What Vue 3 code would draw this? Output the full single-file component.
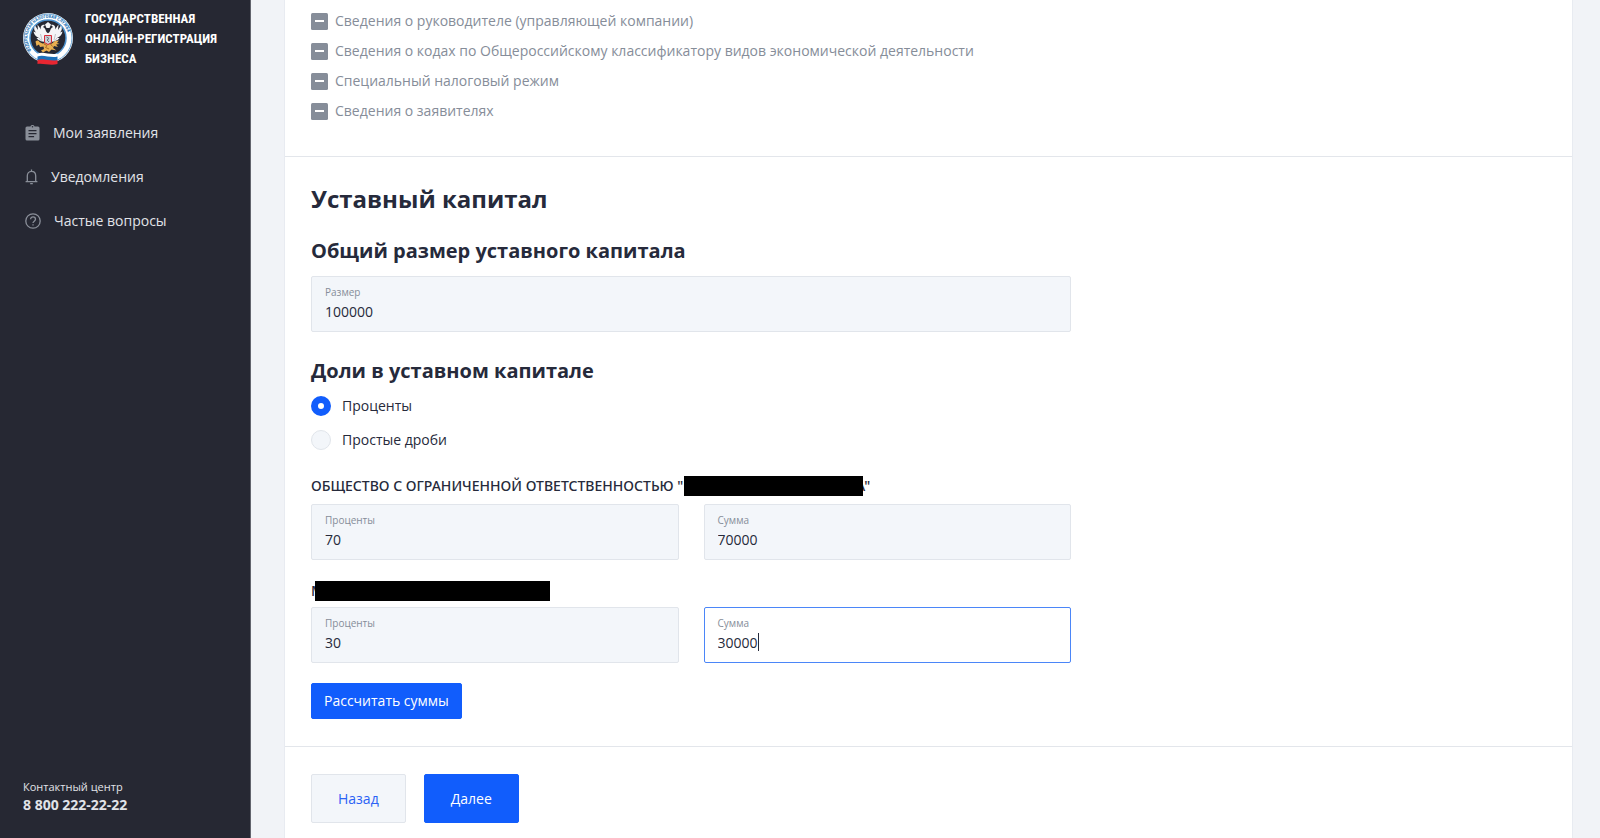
<script setup>
import { ref } from 'vue'

const steps = [
  'Сведения о руководителе (управляющей компании)',
  'Сведения о кодах по Общероссийскому классификатору видов экономической деятельности',
  'Специальный налоговый режим',
  'Сведения о заявителях',
]
const total = ref('100000')
const shareType = ref('percent')
const company = ref({ percent: '70', sum: '70000' })
const person = ref({ percent: '30', sum: '30000' })
</script>

<template>
  <div class="layout">
    <aside class="sidebar">
      <a class="brand" href="#">
        <svg class="emblem" viewBox="0 0 100 104" aria-hidden="true">
          <defs>
            <path id="ring-text" d="M17 75 A 41 41 0 1 1 83 75" />
          </defs>
          <circle cx="50" cy="50" r="50" fill="#fff" />
          <circle cx="50" cy="50" r="48" fill="none" stroke="#6aa5d6" stroke-width="2" />
          <circle cx="50" cy="50" r="36" fill="#262833" stroke="#4c91cd" stroke-width="3" />
          <text class="ring"><textPath href="#ring-text">ФЕДЕРАЛЬНАЯ НАЛОГОВАЯ СЛУЖБА</textPath></text>
          <path fill="#f4f5f7" d="M47 30 l-3-7 6-5 6 5-3 7z" />
          <path fill="#f4f5f7" d="M47 58 C40 58 31 56 27 50 L32 50 C25 47 22 43 21 37 L26 39 C22 35 21 30 24 25 L30 34 29 23 36 33 C34 27 38 22 44 24 L40 28 C45 30 45 35 47 38 C49 41 51 41 53 38 C55 35 55 30 60 28 L56 24 C62 22 66 27 64 33 L71 23 70 34 76 25 C79 30 78 35 74 39 L79 37 C78 43 75 47 68 50 L73 50 C69 56 60 58 53 58 Z" />
          <path d="M32 50l5 6M35 42l3 12M65 42l-3 12M68 50l-5 6" stroke="#8b919a" stroke-width="1" fill="none" />
          <path d="M25 57q5-4 8 1l6 3 7-1 4 3 8-2 6-5 8-1-4 5 5 2-7 1 4 5-8-2-2 4 7 5-10-2-5 5-5-3-7 4-4-4 6-3-1-5-7 1-2-5-5 3z" fill="#e9af50" />
          <path d="M42 62l6 3-3 4 7 3M55 62l4 5" stroke="#a66c26" stroke-width="2" fill="none" />
          <path d="M43 45h14v14l-7 4-7-4z" fill="#c9d0d6" stroke="#d92d3a" stroke-width="2" />
          <path d="M47 48l5 3-4 3 4 4" stroke="#66717b" stroke-width="2" fill="none" />
          <path d="M29 81c12-5 26 4 40 0v7c-14 5-28-4-40 0z" fill="#fff" />
          <path d="M29 87c12-5 26 4 40 0v8c-14 5-28-4-40 0z" fill="#1d70b8" />
          <path d="M29 94c12-5 26 4 40 0v8c-14 4-28-2-40 0z" fill="#e92631" />
        </svg>
        <span class="brand-name">Государственная<br />онлайн-регистрация<br />бизнеса</span>
      </a>

      <nav class="nav">
        <a href="#">
          <svg width="15" height="16" viewBox="0 0 15 16" aria-hidden="true">
            <path fill="currentColor" fill-rule="evenodd" d="M2 1.500h3.400a2.200 2.200 0 0 1 4.200 0H13A1.500 1.500 0 0 1 14.500 3v11a1.500 1.500 0 0 1-1.500 1.500H2A1.500 1.500 0 0 1 .5 14V3A1.500 1.500 0 0 1 2 1.500zM7.500 1a.8.8 0 1 0 0 1.600.8.8 0 0 0 0-1.600zM3.500 5v1.300h8V5zm0 3v1.300h8V8zm0 3v1.300h5.600V11z" />
          </svg>
          Мои заявления
        </a>
        <a href="#">
          <svg width="13" height="16" viewBox="0 0 13 16" fill="none" stroke="currentColor" stroke-width="1.300" aria-hidden="true">
            <path d="M.6 12.700h11.800M2.300 12.500V7c0-2.800 1.600-4.700 4.200-4.700s4.200 1.900 4.200 4.700v5.500M6.500 2.200V.4M5.200 14.700h2.600" />
          </svg>
          Уведомления
        </a>
        <a href="#">
          <svg width="16" height="16" viewBox="0 0 16 16" fill="none" stroke="currentColor" stroke-width="1.300" aria-hidden="true">
            <circle cx="8" cy="8" r="7.200" />
            <path d="M5.600 6.300c0-3.200 4.900-3 4.900 0 0 1.800-2.500 1.900-2.500 3.700M8 11.200v1.400" />
          </svg>
          Частые вопросы
        </a>
      </nav>

      <div class="contact">
        <span>Контактный центр</span>
        <a href="tel:88002222222">8 800 222-22-22</a>
      </div>
    </aside>

    <main class="page">
      <div class="card">
        <section class="steps">
          <ul>
            <li v-for="step in steps" :key="step">
              <svg width="17" height="17" viewBox="0 0 17 17" aria-hidden="true">
                <rect width="17" height="17" rx="1.500" fill="#868d99" />
                <path d="M4 8h9" stroke="#fff" stroke-width="2" />
              </svg>
              {{ step }}
            </li>
          </ul>
        </section>

        <section class="capital">
          <form class="form" @submit.prevent>
            <h1>Уставный капитал</h1>
            <h2>Общий размер уставного капитала</h2>
            <label class="field">
              <span>Размер</span>
              <input v-model="total" type="text" />
            </label>

            <h2 class="shares-title">Доли в уставном капитале</h2>
            <div class="radios">
              <label><input v-model="shareType" type="radio" name="share" value="percent" />Проценты</label>
              <label><input v-model="shareType" type="radio" name="share" value="fraction" />Простые дроби</label>
            </div>

            <p class="owner">ОБЩЕСТВО С ОГРАНИЧЕННОЙ ОТВЕТСТВЕННОСТЬЮ "Е<span class="mask mask-company"></span>А"</p>
            <div class="pair">
              <label class="field">
                <span>Проценты</span>
                <input v-model="company.percent" type="text" />
              </label>
              <label class="field">
                <span>Сумма</span>
                <input v-model="company.sum" type="text" />
              </label>
            </div>

            <p class="owner owner-person">М<span class="mask mask-person"></span></p>
            <div class="pair">
              <label class="field">
                <span>Проценты</span>
                <input v-model="person.percent" type="text" />
              </label>
              <label class="field active">
                <span>Сумма</span>
                <span class="entry"><input v-model="person.sum" type="text" /><i class="caret"></i></span>
              </label>
            </div>

            <button class="btn primary calc" type="button">Рассчитать суммы</button>
          </form>
        </section>

        <footer class="actions">
          <button class="btn secondary" type="button">Назад</button>
          <button class="btn primary" type="button">Далее</button>
        </footer>
      </div>
    </main>
  </div>
</template>

<style>
body {
  margin: 0;
  background: #f1f3f7;
}
</style>

<style scoped>
* {
  box-sizing: border-box;
}
.layout {
  display: flex;
  min-height: 100vh;
  font: 14px/20px "Open Sans", "Noto Sans", sans-serif;
  color: #262a3b;
}
.sidebar {
  flex: none;
  width: 251px;
  display: flex;
  flex-direction: column;
  padding: 9px 22px 24px 23px;
  background: #262833;
  border-right: 1px solid #62646d;
  color: #e1e3e8;
}
a {
  color: inherit;
  text-decoration: none;
}
.brand {
  display: flex;
  align-items: center;
  gap: 12px;
}
.emblem {
  flex: none;
  width: 50px;
  height: 52px;
}
.ring {
  font: bold 9px "Roboto Condensed", "Liberation Sans", sans-serif;
  fill: #2d78b8;
}
.brand-name {
  font: bold 13px/20px "Roboto Condensed", "Roboto", sans-serif;
  color: #fff;
  text-transform: uppercase;
  white-space: nowrap;
}
.nav {
  display: flex;
  flex-direction: column;
  gap: 24px;
  margin-top: 54px;
  padding-left: 2px;
}
.nav a {
  display: flex;
  align-items: center;
  gap: 13px;
}
.nav svg {
  color: #8a8f99;
}
.contact {
  display: flex;
  flex-direction: column;
  margin-top: auto;
  font-size: 11px;
  line-height: 18px;
}
.contact a {
  font-size: 14px;
  font-weight: 700;
}
.page {
  flex: 1;
  display: flex;
  padding: 0 27px 0 33px;
}
.card {
  flex: 1;
  background: #fff;
  border: solid #e8ebf1;
  border-width: 0 1px;
}
.steps {
  padding: 11px 26px 35px;
}
.steps ul {
  display: grid;
  gap: 10px;
  margin: 0;
  padding: 0;
  list-style: none;
}
.steps li {
  display: flex;
  align-items: center;
  gap: 7px;
  min-height: 20px;
  color: #868d99;
}
.capital {
  padding: 25px 26px 27px;
  border: solid #e3e6eb;
  border-width: 1px 0;
}
.form {
  max-width: 760px;
}
h1 {
  margin: 0;
  font-size: 24px;
  line-height: 34px;
}
h2 {
  margin: 20px 0 10px;
  font-size: 20px;
  line-height: 30px;
}
.field {
  display: flex;
  flex-direction: column;
  height: 56px;
  padding: 7px 13px;
  background: #f3f6fa;
  border: 1px solid #e1e5eb;
  border-radius: 2px;
  font-size: 10px;
  line-height: 16px;
  color: #868d99;
}
.field input {
  width: 100%;
  height: 22px;
  padding: 0;
  border: 0;
  outline: 0;
  background: none;
  font: inherit;
  font-size: 14px;
  line-height: 20px;
  color: #262a3b;
}
.field.active {
  background: #fff;
  border-color: #4b86f8;
}
.entry {
  display: flex;
  align-items: center;
}
.field .entry input {
  width: auto;
  field-sizing: content;
}
.caret {
  width: 1px;
  height: 18px;
  background: #262a3b;
}
.shares-title {
  margin: 24px 0 10px;
}
.radios {
  display: grid;
  justify-items: start;
  gap: 14px;
}
.radios label {
  display: flex;
  align-items: center;
  gap: 11px;
}
.radios input {
  appearance: none;
  width: 20px;
  height: 20px;
  margin: 0;
  border: 1px solid #e1e5eb;
  border-radius: 50%;
  background: #f3f6fa;
}
.radios input:checked {
  border: 7px solid #115dfc;
  background: #fff;
}
.owner {
  display: flex;
  align-items: center;
  margin: 26px 0 8px;
  font-family: "Noto Sans", sans-serif;
  font-weight: 500;
  line-height: 20px;
  white-space: nowrap;
}
.owner-person {
  margin-top: 21px;
  margin-bottom: 6px;
}
.mask {
  position: relative;
  height: 20px;
  background: #000;
}
.mask-company {
  width: 179px;
  margin: 0 -7px 0 -7px;
}
.mask-person {
  width: 235px;
  margin-left: -9px;
}
.pair {
  display: grid;
  grid-template-columns: 1fr 1fr;
  gap: 25px;
}
.btn {
  height: 49px;
  padding: 0 26px;
  border: 1px solid #115dfc;
  border-radius: 2px;
  font: inherit;
  font-weight: 500;
}
.primary {
  background: #115dfc;
  color: #fff;
}
.secondary {
  background: #f3f6fa;
  border-color: #e1e5eb;
  color: #2b62f5;
}
.calc {
  height: 36px;
  margin-top: 20px;
  padding: 0 12px;
  display: block;
}
.actions {
  display: flex;
  gap: 18px;
  padding: 27px 26px 14px;
}
</style>
